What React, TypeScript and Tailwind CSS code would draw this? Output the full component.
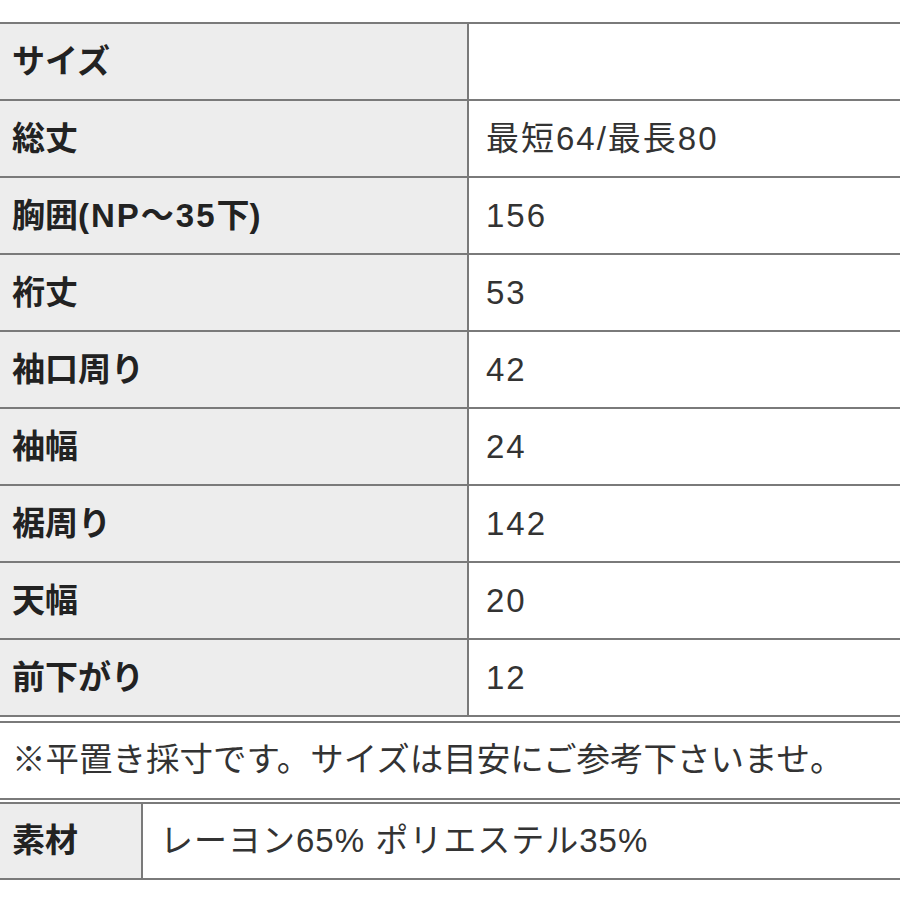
import React from "react";

const rows: [React.ReactNode, string][] = [
  ["サイズ", ""],
  ["総丈", "最短64/最長80"],
  [
    <>
      胸囲<span className="tracking-[2px]">(NP～35</span>下)
    </>,
    "156",
  ],
  ["裄丈", "53"],
  ["袖口周り", "42"],
  ["袖幅", "24"],
  ["裾周り", "142"],
  ["天幅", "20"],
  ["前下がり", "12"],
];

const label = "font-['Liberation_Sans','Noto_Sans_CJK_JP',sans-serif] font-bold text-[33px] text-[#222]";
const value = "font-['Liberation_Sans','Noto_Sans_CJK_JP',sans-serif] text-[33px] tracking-[2px] text-[#333]";
const note = "font-['Liberation_Sans','Noto_Sans_CJK_JP',sans-serif] text-[33.5px] text-[#333]";

export default function App() {
  return (
    <div className="w-[900px] h-[900px] bg-white overflow-hidden pt-[22px]">
      <div className="flex flex-col border-b-2 border-[#7a7a7a]">
        {rows.map(([k, v], i) => (
          <div key={i} className="flex h-[77px] border-t-2 border-[#7a7a7a]">
            <div className={`w-[467px] shrink-0 bg-[#ededed] flex items-center pl-[12px] whitespace-nowrap ${label}`}>{k}</div>
            <div className={`flex-1 border-l-2 border-[#7a7a7a] flex items-center pl-[17px] whitespace-nowrap ${value}`}>{v}</div>
          </div>
        ))}
      </div>
      <div className={`mt-[4px] h-[79px] border-t-2 border-b-2 border-[#7a7a7a] flex items-center pl-[12px] whitespace-nowrap ${note}`}>
        ※平置き採寸です。サイズは目安にご参考下さいませ。
      </div>
      <div className="mt-[2px] flex h-[78px] border-t-2 border-b-2 border-[#7a7a7a]">
        <div className={`w-[141px] shrink-0 bg-[#ededed] flex items-center pl-[12px] whitespace-nowrap ${label}`}>素材</div>
        <div className={`flex-1 border-l-2 border-[#7a7a7a] flex items-center pl-[17px] whitespace-nowrap font-['Liberation_Sans','Noto_Sans_CJK_JP',sans-serif] text-[33px] tracking-[1px] text-[#333]`}>
          レーヨン65% ポリエステル35%
        </div>
      </div>
    </div>
  );
}
